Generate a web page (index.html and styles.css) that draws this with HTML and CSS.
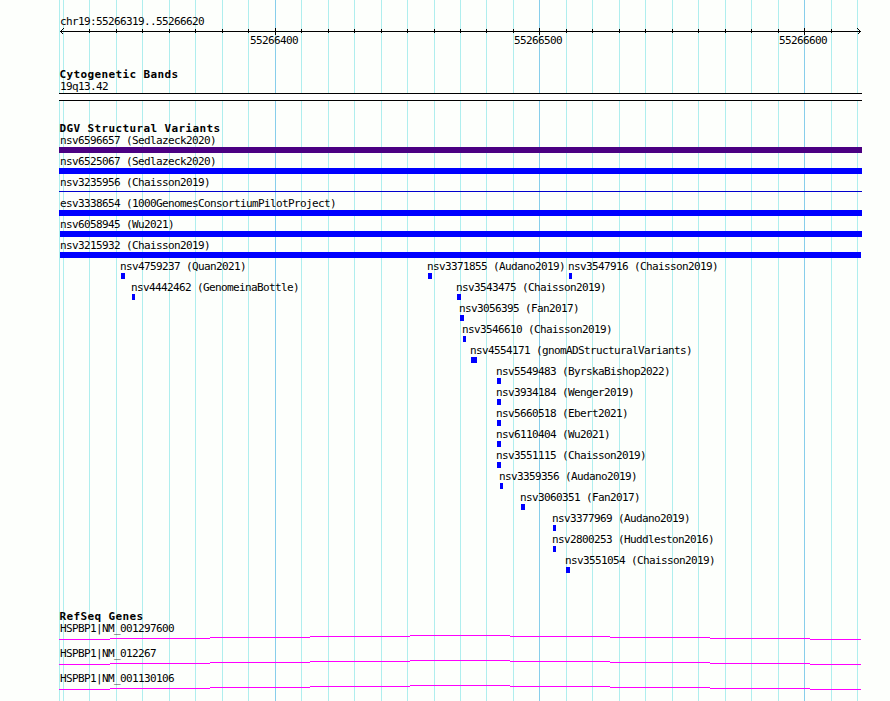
FILE: index.html
```
<!DOCTYPE html>
<html lang="en">

<head>
    <meta charset="UTF-8">
    <meta name="viewport" content="width=device-width, initial-scale=1.0">
    <title>chr19:55266319..55266620</title>
    <link rel="stylesheet" href="styles.css">
</head>

<body>
    <svg class="gridLines" width="890" height="701" shape-rendering="crispEdges">
        <path class="minor" d="M59.5 0V701M63.5 0V701M89.5 0V701M116.5 0V701M142.5 0V701M169.5 0V701M195.5 0V701M222.5 0V701M248.5 0V701M301.5 0V701M328.5 0V701M354.5 0V701M381.5 0V701M407.5 0V701M434.5 0V701M460.5 0V701M486.5 0V701M513.5 0V701M566.5 0V701M592.5 0V701M619.5 0V701M645.5 0V701M672.5 0V701M698.5 0V701M725.5 0V701M751.5 0V701M778.5 0V701M831.5 0V701M857.5 0V701" />
        <path class="major" d="M275.5 0V701M539.5 0V701M804.5 0V701" />
    </svg>
    <main class="panel">
        <section class="ruler">
            <p class="label">chr19:55266319..55266620</p>
            <svg class="axis" width="803" height="8" shape-rendering="crispEdges">
                <path d="M1 4.5H802M30.5 2V6M57.5 2V6M83.5 2V6M110.5 2V6M136.5 2V6M163.5 2V6M189.5 2V6M216.5 1V8M242.5 2V6M269.5 2V6M295.5 2V6M322.5 2V6M348.5 2V6M375.5 2V6M401.5 2V6M427.5 2V6M454.5 2V6M480.5 1V8M507.5 2V6M533.5 2V6M560.5 2V6M586.5 2V6M613.5 2V6M639.5 2V6M666.5 2V6M692.5 2V6M719.5 2V6M745.5 1V8M772.5 2V6" />
                <path d="M4.5 1.5L1.5 4.5L4.5 7.5M798.5 1.5L801.5 4.5L798.5 7.5" />
            </svg>
            <div class="lane ticks">
                <span class="tick" style="--x: 191px">55266400</span>
                <span class="tick" style="--x: 455px">55266500</span>
                <span class="tick" style="--x: 720px">55266600</span>
            </div>
        </section>

        <section class="track bands">
            <h2>Cytogenetic Bands</h2>
            <p class="label">19q13.42</p>
            <div class="band"></div>
        </section>

        <section class="track variants">
            <h2>DGV Structural Variants</h2>
            <div class="full"><p class="label">nsv6596657 (Sedlazeck2020)</p><div class="bar indigo"></div></div>
            <div class="full"><p class="label">nsv6525067 (Sedlazeck2020)</p><div class="bar"></div></div>
            <div class="full"><p class="label">nsv3235956 (Chaisson2019)</p><div class="bar thin"></div></div>
            <div class="full"><p class="label">esv3338654 (1000GenomesConsortiumPilotProject)</p><div class="bar"></div></div>
            <div class="full"><p class="label">nsv6058945 (Wu2021)</p><div class="bar from60"></div></div>
            <div class="full"><p class="label">nsv3215932 (Chaisson2019)</p><div class="bar from60 to861"></div></div>
            <div class="lane">
                <div class="feature" style="--x: 61px; --w: 4px">nsv4759237 (Quan2021)</div>
                <div class="feature" style="--x: 368px; --w: 4px">nsv3371855 (Audano2019)</div>
                <div class="feature" style="--x: 509px; --w: 3px">nsv3547916 (Chaisson2019)</div>
            </div>
            <div class="lane">
                <div class="feature" style="--x: 72px; --w: 3px">nsv4442462 (GenomeinaBottle)</div>
                <div class="feature" style="--x: 397px; --w: 4px">nsv3543475 (Chaisson2019)</div>
            </div>
            <div class="lane"><div class="feature" style="--x: 400px; --w: 4px">nsv3056395 (Fan2017)</div></div>
            <div class="lane"><div class="feature" style="--x: 403px; --w: 3px">nsv3546610 (Chaisson2019)</div></div>
            <div class="lane"><div class="feature" style="--x: 411px; --w: 6px">nsv4554171 (gnomADStructuralVariants)</div></div>
            <div class="lane"><div class="feature" style="--x: 437px; --w: 4px">nsv5549483 (ByrskaBishop2022)</div></div>
            <div class="lane"><div class="feature" style="--x: 437px; --w: 4px">nsv3934184 (Wenger2019)</div></div>
            <div class="lane"><div class="feature" style="--x: 437px; --w: 4px">nsv5660518 (Ebert2021)</div></div>
            <div class="lane"><div class="feature" style="--x: 437px; --w: 4px">nsv6110404 (Wu2021)</div></div>
            <div class="lane"><div class="feature" style="--x: 437px; --w: 4px">nsv3551115 (Chaisson2019)</div></div>
            <div class="lane"><div class="feature" style="--x: 440px; --w: 3px">nsv3359356 (Audano2019)</div></div>
            <div class="lane"><div class="feature" style="--x: 461px; --w: 4px">nsv3060351 (Fan2017)</div></div>
            <div class="lane"><div class="feature" style="--x: 493px; --w: 3px">nsv3377969 (Audano2019)</div></div>
            <div class="lane"><div class="feature" style="--x: 493px; --w: 3px">nsv2800253 (Huddleston2016)</div></div>
            <div class="lane"><div class="feature" style="--x: 506px; --w: 4px">nsv3551054 (Chaisson2019)</div></div>
        </section>

        <section class="track genes">
            <h2>RefSeq Genes</h2>
            <div class="gene">
                <p class="label">HSPBP1|NM_001297600</p>
                <svg class="intron" width="803" height="5" shape-rendering="crispEdges">
                    <path id="hat" d="M0 4.5H51M51 3.5H151M151 2.5H251M251 1.5H351M351 .5H451M451 1.5H551M551 2.5H651M651 3.5H751M751 4.5H802" />
                </svg>
            </div>
            <div class="gene">
                <p class="label">HSPBP1|NM_012267</p>
                <svg class="intron" width="803" height="5" shape-rendering="crispEdges"><use href="#hat" /></svg>
            </div>
            <div class="gene">
                <p class="label">HSPBP1|NM_001130106</p>
                <svg class="intron" width="803" height="5" shape-rendering="crispEdges"><use href="#hat" /></svg>
            </div>
        </section>
    </main>
</body>

</html>
```
FILE: styles.css
```
body {
    margin: 0;
    width: 890px;
    height: 701px;
    overflow: hidden;
    background-color: #fdfffc;
    color: black;
    font-family: "DejaVu Sans Mono", monospace;
    font-size: 11px;
    line-height: 13px;
    letter-spacing: -0.62px;
}

h2,
p {
    margin: 0;
    white-space: nowrap;
}

svg {
    display: block;
    fill: none;
}

/* lines behind all the tracks */
.gridLines {
    position: absolute;
    top: 0;
    left: 0;
    z-index: -1;
}

.minor {
    stroke: #afeeee;
}

.major {
    stroke: #87ceeb;
}

.panel {
    width: 803px;
    padding: 15px 0 0 59px;
}

.label {
    height: 13px;
    padding-left: 1px;
}

.axis {
    margin-top: -1px;
    stroke: black;
}

.lane {
    display: grid;
    white-space: nowrap;
}

.ticks {
    margin-top: -1px;
}

.tick,
.feature {
    grid-area: 1 / 1;
    margin-left: var(--x);
}

.track h2 {
    height: 12px;
    padding-left: 0.4px;
    font-size: 11px;
    line-height: 13px;
    letter-spacing: 0.38px;
}

.bands {
    margin-top: 21px;
}

.band {
    height: 6px;
    border-top: 1px solid black;
    border-bottom: 1px solid black;
    background-color: white;
}

.variants {
    margin-top: 21px;
}

.full,
.variants .lane {
    height: 21px;
}

.bar {
    height: 6px;
    background-color: blue;
}

.indigo {
    background-color: #4b0082;
}

.thin {
    height: 1px;
    margin-top: 2px;
    background-color: #0000cd;
}

.from60 {
    margin-left: 1px;
}

.to861 {
    margin-right: 1px;
}

.feature::after {
    content: "";
    display: block;
    width: var(--w);
    height: 6px;
    margin-left: 1px;
    background-color: blue;
}

.full {
    overflow: hidden;
}

.genes {
    margin-top: 35px;
}

.gene {
    height: 25px;
}

.intron {
    stroke: magenta;
}
```
